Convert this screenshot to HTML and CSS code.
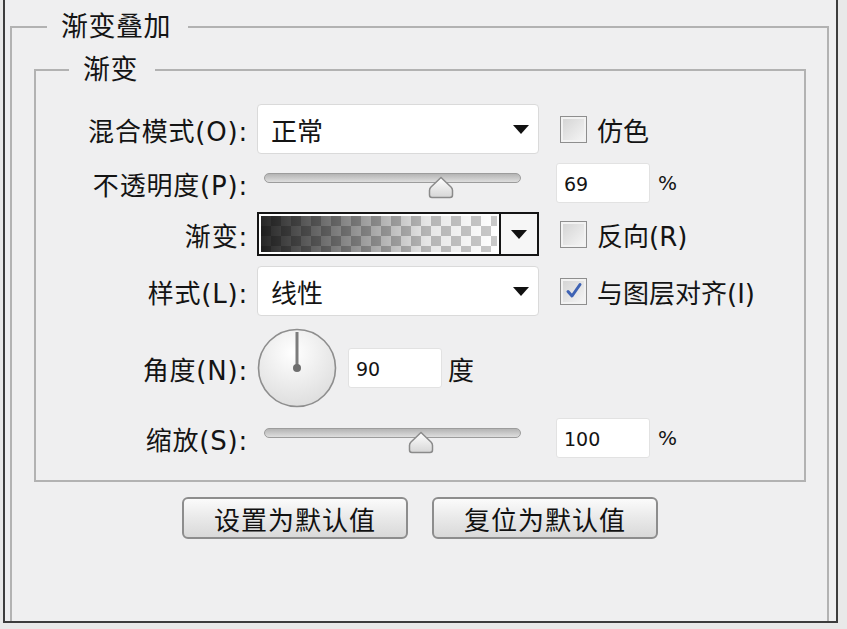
FILE: index.html
```html
<!DOCTYPE html>
<html lang="zh-CN">
<head>
  <meta charset="UTF-8">
  <title>渐变叠加</title>
  <link rel="stylesheet" href="styles.css">
</head>
<body>

  <div class="dialog">

    <fieldset class="group outer">
      <legend>渐变叠加</legend>

      <fieldset class="group inner">
        <legend>渐变</legend>

        <div class="rows">

          <div class="row">
            <label class="lbl">混合模式(O):</label>
            <div class="select"><span>正常</span><i class="caret"></i></div>
            <label class="check"><span class="box"></span>仿色</label>
          </div>

          <div class="row">
            <label class="lbl">不透明度(P):</label>
            <div class="slider">
              <div class="track">
                <svg class="thumb" style="left: 69%" width="26" height="23" viewBox="0 0 26 23">
                  <defs>
                    <linearGradient id="tg1" x1="0" y1="0" x2="0" y2="1">
                      <stop offset="0" stop-color="#ffffff"/>
                      <stop offset="1" stop-color="#d6d6d6"/>
                    </linearGradient>
                  </defs>
                  <path d="M13 1.5 L23 11 Q24.5 12.5 24.5 14.5 V19 Q24.5 21.5 22 21.5 H4 Q1.5 21.5 1.5 19 V14.5 Q1.5 12.5 3 11 Z" fill="url(#tg1)" stroke="#8a8a8a" stroke-width="1.5"/>
                </svg>
              </div>
            </div>
            <div class="side">
              <div class="num">69</div>
              <span class="unit">%</span>
            </div>
          </div>

          <div class="row">
            <label class="lbl">渐变:</label>
            <div class="gradient">
              <div class="ramp"></div>
              <div class="ramp-btn"><i class="caret"></i></div>
            </div>
            <label class="check"><span class="box"></span>反向(R)</label>
          </div>

          <div class="row">
            <label class="lbl">样式(L):</label>
            <div class="select"><span>线性</span><i class="caret"></i></div>
            <label class="check">
              <span class="box">
                <svg width="22" height="22" viewBox="0 0 22 22">
                  <path d="M5 11.5 L9 16 L17 4.5" fill="none" stroke="#3f63b4" stroke-width="3" stroke-linecap="round" stroke-linejoin="round"/>
                </svg>
              </span>与图层对齐(I)
            </label>
          </div>

          <div class="row">
            <label class="lbl">角度(N):</label>
            <svg class="dial" width="80" height="80" viewBox="0 0 80 80">
              <defs>
                <radialGradient id="dg" cx="0.45" cy="0.3" r="0.75">
                  <stop offset="0" stop-color="#ffffff"/>
                  <stop offset="1" stop-color="#dcdcdc"/>
                </radialGradient>
              </defs>
              <circle cx="40" cy="40" r="38.5" fill="url(#dg)" stroke="#8e8e8e" stroke-width="1.6"/>
              <line x1="40" y1="40" x2="40" y2="4" stroke="#7c7c7c" stroke-width="3"/>
              <circle cx="40" cy="40" r="4" fill="#6e6e6e"/>
            </svg>
            <div class="num angle">90</div>
            <span class="deg">度</span>
          </div>

          <div class="row">
            <label class="lbl">缩放(S):</label>
            <div class="slider">
              <div class="track">
                <svg class="thumb" style="left: 61%" width="26" height="23" viewBox="0 0 26 23">
                  <defs>
                    <linearGradient id="tg2" x1="0" y1="0" x2="0" y2="1">
                      <stop offset="0" stop-color="#ffffff"/>
                      <stop offset="1" stop-color="#d6d6d6"/>
                    </linearGradient>
                  </defs>
                  <path d="M13 1.5 L23 11 Q24.5 12.5 24.5 14.5 V19 Q24.5 21.5 22 21.5 H4 Q1.5 21.5 1.5 19 V14.5 Q1.5 12.5 3 11 Z" fill="url(#tg2)" stroke="#8a8a8a" stroke-width="1.5"/>
                </svg>
              </div>
            </div>
            <div class="side">
              <div class="num">100</div>
              <span class="unit">%</span>
            </div>
          </div>

        </div>
      </fieldset>

      <div class="buttons">
        <button class="btn">设置为默认值</button>
        <button class="btn">复位为默认值</button>
      </div>

    </fieldset>

  </div>

</body>
</html>
```

FILE: styles.css
```css
* {
  box-sizing: border-box;
  margin: 0;
  padding: 0;
}

body {
  background-color: #e9e9e9;
  font-family: "DejaVu Sans", "Noto Sans CJK SC", sans-serif;
  color: #141414;
  width: 847px;
  height: 629px;
  overflow: hidden;
}

.dialog {
  display: flex;
  flex-direction: column;
  margin-left: 3px;
  width: 835px;
  height: 623px;
  padding: 10px 7px 0 5px;
  background-color: #efeff0;
  border: 2px solid #3d3d3d;
  border-top: none;
}

.group {
  border: 2px solid #b2b2b2;
  min-width: 0;
}

.group legend {
  font-size: 27px;
  line-height: 34px;
  letter-spacing: 0.5px;
  padding: 0 17px 0 14px;
}

.outer {
  flex: 1;
  width: 819px;
  border-bottom: none;
  padding: 11px 21px 0 22px;
}

.outer > legend {
  margin-left: 13px;
}

.inner {
  padding: 19px 0 14px 0;
}

.inner > legend {
  font-size: 27px;
  line-height: 30px;
  margin-left: 33px;
}

.rows {
  display: grid;
  grid-template-rows: 50px 58px 44px 70px 84px 56px;
}

.row {
  display: flex;
  align-items: center;
}

.lbl {
  width: 212px;
  margin-right: 9px;
  text-align: right;
  font-size: 26px;
  letter-spacing: 0.8px;
  white-space: nowrap;
}

.select {
  display: flex;
  align-items: center;
  justify-content: space-between;
  width: 282px;
  height: 50px;
  padding: 0 9px 0 13px;
  background-color: #fff;
  border: 1px solid #dadada;
  border-radius: 4px;
  font-size: 26px;
}

.caret {
  display: block;
  width: 0;
  height: 0;
  border-left: 8px solid transparent;
  border-right: 8px solid transparent;
  border-top: 9px solid #111;
}

.check {
  display: flex;
  align-items: center;
  margin-left: 21px;
  font-size: 26px;
  white-space: nowrap;
}

.box {
  display: flex;
  align-items: center;
  justify-content: center;
  width: 27px;
  height: 27px;
  margin-right: 10px;
  border: 1px solid #8e8e8e;
  background: linear-gradient(to bottom right, #d2d2d2, #f7f7f7);
  box-shadow: inset 0 0 0 2px #f2f2f2;
}

.slider {
  width: 282px;
  height: 30px;
  padding: 5px 18px 0 7px;
}

.track {
  position: relative;
  height: 10px;
  border: 1px solid #9c9c9c;
  border-radius: 5px;
  background: linear-gradient(to bottom, #b4b4b4, #dedede);
}

.thumb {
  position: absolute;
  top: 2px;
  margin-left: -13px;
}

.side {
  display: flex;
  align-items: center;
  margin-left: 17px;
}

.num {
  width: 94px;
  height: 40px;
  padding-left: 7px;
  line-height: 40px;
  font-size: 19px;
  background-color: #fff;
  border: 1px solid #e2e2e2;
  border-radius: 3px;
}

.unit {
  margin-left: 8px;
  font-size: 20px;
}

.gradient {
  display: flex;
  width: 282px;
  height: 44px;
  border: 2px solid #151515;
}

.ramp {
  flex: 1;
  border: 2px solid #fff;
  background:
    linear-gradient(to right, rgba(0, 0, 0, 0.85), rgba(0, 0, 0, 0.1) 70%, rgba(0, 0, 0, 0)),
    repeating-conic-gradient(#c9c9c9 0 25%, #ffffff 0 50%) 0 0 / 20px 20px;
}

.ramp-btn {
  display: flex;
  align-items: center;
  justify-content: center;
  width: 38px;
  border-left: 2px solid #151515;
  background-color: #f6f6f6;
}

.dial {
  flex: none;
}

.angle {
  margin-left: 11px;
}

.deg {
  margin-left: 6px;
  font-size: 26px;
}

.buttons {
  display: flex;
  justify-content: center;
  gap: 24px;
  margin-top: 15px;
}

.btn {
  width: 226px;
  height: 42px;
  font-family: "DejaVu Sans", "Noto Sans CJK SC", sans-serif;
  font-size: 26px;
  letter-spacing: 1px;
  color: #111;
  background: linear-gradient(to bottom, #fbfbfb, #e9e9e9 50%, #d9d9d9);
  border: 2px solid #8d8d8d;
  border-radius: 6px;
}
```
